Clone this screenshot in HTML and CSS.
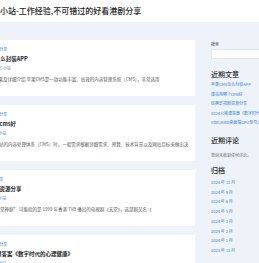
FILE: index.html
```html
<!DOCTYPE html>
<html lang="zh-CN">
<head>
   <meta charset="UTF-8">
   <meta name="viewport" content="width=device-width, initial-scale=1.0">
   <title>小站-工作经验,不可错过的好看港剧分享</title>
   <link rel="stylesheet" href="styles.css">
</head>

<body>

   <!-- Header -->
   <header class="site-header">
       <h1 class="site-title">小站-工作经验,不可错过的好看港剧分享</h1>
   </header>

   <div class="layout">

       <!-- Post list -->
       <main class="posts">
           <article class="card">
               <div class="post-cat">首页 / 建站技术分享</div>
               <h2 class="post-title">苹果CMS怎么封装APP</h2>
               <div class="post-date">2024年12月25日 小站</div>
               <p class="post-excerpt">APP教程：苹果及详细介绍 苹果CMS是一款功能丰富、高效的内容管理系统（CMS），非常适用</p>
           </article>

           <article class="card">
               <div class="post-cat">首页 / 网站经验分享</div>
               <h2 class="post-title">建站用哪个cms好</h2>
               <div class="post-date">2024年9月8日 小站</div>
               <p class="post-excerpt">在选择适合建站的内容处理体系（CMS）时，一般需求根据详细需求、预算、技术背景以及网站目标来做出决</p>
           </article>

           <article class="card">
               <div class="post-cat">首页 / 影视剧分享</div>
               <h2 class="post-title">经典影视剧资源分享</h2>
               <div class="post-date">2024年6月7日 小站</div>
               <p class="post-excerpt">天堂神剧 “天堂神剧” 可能指的是 1999 年香港 TVB 播出的电视剧《天堂》，这部剧又名《</p>
           </article>

           <article class="card">
               <div class="post-cat">首页 / 工作经验分享</div>
               <h2 class="post-title">2024公需课答案《数字时代的心理健康》</h2>
               <div class="post-date">2024年5月3日 小站</div>
               <p class="post-excerpt">2024年公需课《数字时代的心理健康》考试答案整理</p>
           </article>
       </main>

       <!-- Sidebar -->
       <aside class="sidebar">
           <label class="search-label" for="s">搜索</label>
           <input type="text" id="s" class="search-input">

           <h3 class="widget-title first">近期文章</h3>
           <ul class="links">
               <li><a href="#">苹果CMS怎么封装APP</a></li>
               <li><a href="#">建站用哪个cms好</a></li>
               <li><a href="#">经典影视剧资源分享</a></li>
               <li><a href="#">2024公需课答案《数字时代的心理健康》</a></li>
               <li><a href="#">Intel/AMD桌面端CPU型号大全</a></li>
           </ul>

           <h3 class="widget-title comments">近期评论</h3>
           <p class="no-comments">您尚未收到任何评论。</p>

           <h3 class="widget-title archive">归档</h3>
           <ul class="links archive-list">
               <li><a href="#">2024 年 12 月</a></li>
               <li><a href="#">2024 年 9 月</a></li>
               <li><a href="#">2024 年 6 月</a></li>
               <li><a href="#">2024 年 5 月</a></li>
               <li><a href="#">2024 年 3 月</a></li>
               <li><a href="#">2024 年 2 月</a></li>
               <li><a href="#">2024 年 1 月</a></li>
               <li><a href="#">2023 年 12 月</a></li>
           </ul>

           <h3 class="widget-title cats">分类</h3>
       </aside>

   </div>

</body>
</html>
```

FILE: styles.css
```css
body {
    margin: 0;
    font-family: "Noto Sans CJK SC", "Noto Sans", sans-serif;
    background-color: #eef3f9;
    color: #333;
    overflow: hidden;
}
.site-header {
    background-color: #fff;
    height: 22px;
    display: flex;
    align-items: center;
}
.site-title {
    margin: 0;
    font-size: 8px;
    font-weight: 500;
    color: #222;
    line-height: 10px;
}
.layout {
    display: flex;
    gap: 16px;
    margin-left: -40px;
    padding-top: 18px;
}
.posts {
    width: 235px;
    flex: none;
    display: flex;
    flex-direction: column;
    gap: 9px;
}
.card {
    background-color: #fff;
    height: 56px;
    box-sizing: border-box;
    padding: 5px 4px 0 12px;
    overflow: hidden;
}
.post-cat,
.post-date {
    font-size: 4px;
    line-height: 8px;
    color: #2f7fd1;
    white-space: nowrap;
}
.post-title {
    margin: 1px 0 0 0;
    font-size: 5.5px;
    font-weight: 700;
    line-height: 10px;
    color: #222;
    white-space: nowrap;
}
.post-excerpt {
    margin: 3px 0 0 0;
    font-size: 4.5px;
    line-height: 8px;
    color: #555;
    white-space: nowrap;
    overflow: hidden;
}
.sidebar {
    flex: 1;
    min-width: 60px;
}
.search-label {
    display: block;
    margin-top: 1px;
    font-size: 4px;
    line-height: 6px;
    color: #444;
}
.search-input {
    display: block;
    margin-top: 2px;
    width: 60px;
    height: 10px;
    box-sizing: border-box;
    border: 1px solid #e3e8ee;
    background: #fff;
    padding: 0;
}
.widget-title {
    margin: 0;
    font-size: 7px;
    font-weight: 500;
    line-height: 10px;
    color: #222;
    white-space: nowrap;
}
.widget-title.first {
    margin-top: 10px;
}
.widget-title.comments {
    margin-top: 7px;
}
.widget-title.archive {
    margin-top: 5px;
}
.widget-title.cats {
    margin-top: 6px;
}
.links {
    list-style: none;
    margin: 1px 0 0 0;
    padding: 0;
    font-size: 4px;
    line-height: 9.5px;
    white-space: nowrap;
}
.links a {
    color: #2f7fd1;
    text-decoration: none;
}
.archive-list {
    margin-top: 3px;
    line-height: 9.7px;
}
.no-comments {
    margin: 6px 0 0 0;
    font-size: 4px;
    line-height: 9.5px;
    color: #666;
    white-space: nowrap;
}
```
